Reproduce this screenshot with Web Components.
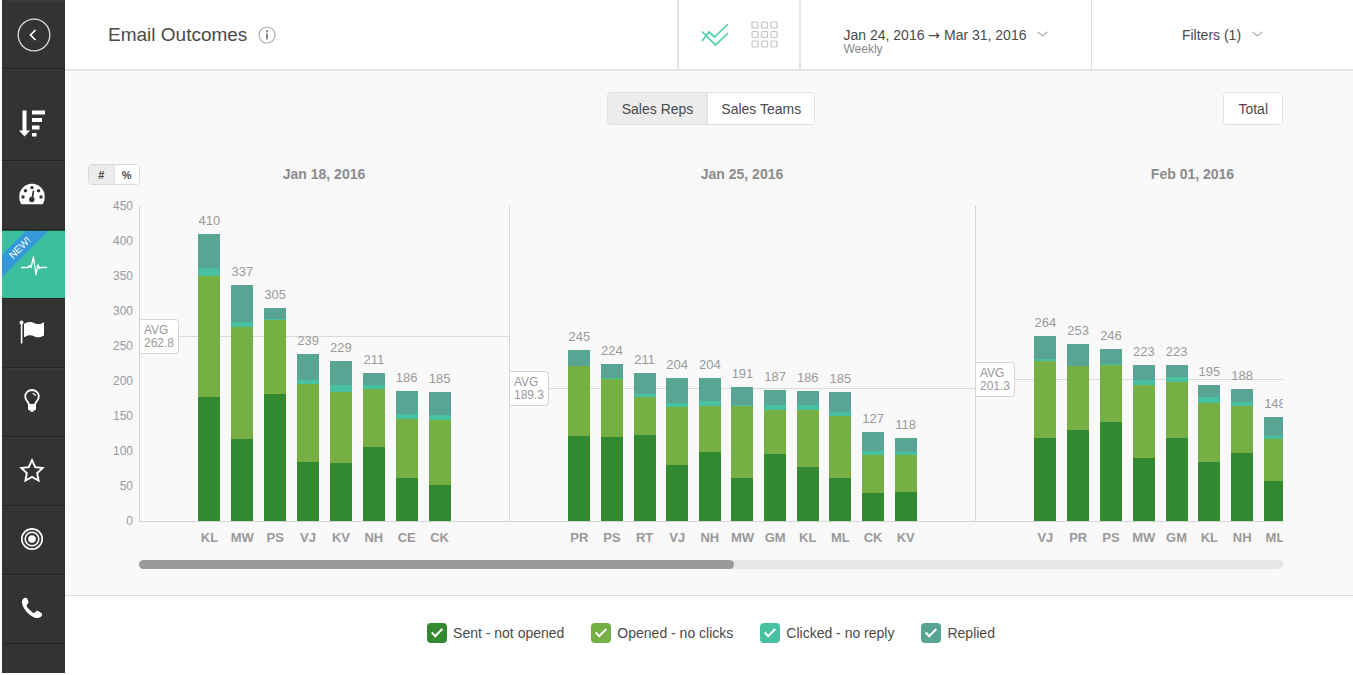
<!DOCTYPE html>
<html lang="en">
<head>
<meta charset="utf-8">
<title>Email Outcomes</title>
<style>
  body { margin: 0; background: #fff; color: #4a4a4a; font-family: "Liberation Sans", Arial, Helvetica, sans-serif; font-size: 14px; }
</style>
</head>
<body>
<outcomes-app></outcomes-app>

<script>
const SERIES = [
  { name: 'Sent - not opened', color: '#33892f' },
  { name: 'Opened - no clicks', color: '#76af44' },
  { name: 'Clicked - no reply', color: '#47c19f' },
  { name: 'Replied', color: '#58a594' }
];
const SCALE_MAX = 450;
const GROUPS = [
  { title: 'Jan 18, 2016', avg: 262.8, width: 370, columns: 8, bars: [
    ['KL', 177, 173, 12, 48], ['MW', 117, 160, 7, 53], ['PS', 181, 106, 1, 17], ['VJ', 84, 112, 6, 37],
    ['KV', 83, 102, 10, 34], ['NH', 106, 82, 6, 17], ['CE', 61, 85, 7, 33], ['CK', 51, 93, 8, 33]] },
  { title: 'Jan 25, 2016', avg: 189.3, width: 466, columns: 11, bars: [
    ['PR', 122, 100, 0, 23], ['PS', 120, 83, 1, 20], ['RT', 123, 54, 5, 29], ['VJ', 80, 83, 6, 35],
    ['NH', 98, 67, 7, 32], ['MW', 62, 102, 2, 25], ['GM', 96, 63, 7, 21], ['KL', 77, 81, 8, 20],
    ['ML', 61, 89, 6, 29], ['CK', 40, 55, 5, 27], ['KV', 42, 53, 3, 20]] },
  { title: 'Feb 01, 2016', avg: 201.3, width: 435, columns: 10, bars: [
    ['VJ', 119, 109, 3, 33], ['PR', 130, 91, 1, 31], ['PS', 142, 81, 2, 21], ['MW', 90, 105, 6, 22],
    ['GM', 119, 80, 7, 17], ['KL', 84, 84, 9, 18], ['NH', 97, 68, 5, 18], ['ML', 57, 60, 5, 26]] }
];

class BaseElement extends HTMLElement {
  connectedCallback() {
    if (this.shadowRoot) return;
    this.attachShadow({ mode: 'open' }).innerHTML = this.render();
  }
}

/* ---------- side navigation ---------- */
customElements.define('nav-item', class extends BaseElement {
  render() {
    return `<style>
      :host { display: block; height: 69px; }
      :host([tall]) { height: 92px; }
      a { position: relative; box-sizing: border-box; display: flex; align-items: center; justify-content: center;
          height: 100%; padding: 0 4px 4px 0; border-bottom: 1px solid #242424; border-top: 1px solid #3a3a3a; color: #fff; overflow: hidden; }
      :host([home]) a { padding: 0; }
      :host([tall]) a { padding-top: 20px; }
      :host([current]) a { background: #3cbf9c; border-top: 1px solid #1f4a3e; border-bottom-color: #222; padding: 2px 0 0; }
      .ribbon { position: absolute; left: -30px; top: 9px; width: 96px; line-height: 16px; text-align: center;
          background: #3498db; color: #fff; font-size: 10px; transform: rotate(-45deg); }
    </style>
    <a href="#" aria-label="${this.getAttribute('label')}"><slot></slot>${
      this.hasAttribute('badge') ? `<span class="ribbon">${this.getAttribute('badge')}</span>` : ''}</a>`;
  }
});

customElements.define('side-nav', class extends BaseElement {
  render() {
    return `<style>
      :host { display: block; width: 63px; flex: none; margin-left: 2px; background: #333; }
      svg { display: block; }
    </style>
    <nav aria-label="Main">
      <nav-item home label="Back"><svg width="34" height="34" viewBox="0 0 34 34" fill="none" stroke="#ddd">
        <circle cx="17" cy="17" r="15.8" stroke-width="1.3"/><path d="M18.5 12l-5 5 5 5" stroke="#fff" stroke-width="1.7"/></svg></nav-item>
      <nav-item tall label="Rankings"><svg width="26" height="28" viewBox="0 0 26 28" fill="#fff">
        <path d="M3.500 1.500h4v20h3.500L5.500 27.500 0 21.500h3.500zM13 1.500h13v4H13zM13 9h10v4H13zM13 16.500h7.500v4H13zM13 24h4.500v3.500H13z"/></svg></nav-item>
      <nav-item label="Dashboard"><svg width="26" height="22" viewBox="0 0 26 22">
        <path d="M1.800 20.500A12.600 12.600 0 0 1 0.300 13.500a12.700 12.700 0 0 1 25.400 0 12.600 12.600 0 0 1-1.500 7q-.4.7-1.200.7H3q-.8 0-1.200-.7z" fill="#fff"/>
        <g fill="#333"><circle cx="4" cy="14" r="1.700"/><circle cx="6.500" cy="7.800" r="1.700"/><circle cx="13" cy="4.600" r="1.700"/><circle cx="19.500" cy="7.800" r="1.700"/><circle cx="22" cy="14" r="1.700"/><circle cx="12.800" cy="16.500" r="2.700"/><path d="M13.800 7.500l1.500.3-1.300 9h-2z"/></g></svg></nav-item>
      <nav-item current badge="NEW!" label="Activity"><svg width="26" height="20" viewBox="0 0 26 20" fill="none" stroke="#fff" stroke-width="1.300" stroke-linejoin="round">
        <path d="M0 11.500h7l1.500-2 1.500 2 2.500-10.500 2.500 17.500 2-9.500 1.500 3.500 1.300-1H26"/></svg></nav-item>
      <nav-item label="Goals"><svg width="26" height="24" viewBox="0 0 26 24" fill="#fff">
        <circle cx="2.500" cy="2.500" r="2"/><path d="M1.800 3h1.600v20.500H1.800zM5 4c4-2.500 7-2.500 10.500-.8 3.500 1.600 6 1 9.500-1v13.300c-3.500 2-6 2.500-9.500.9-3.500-1.700-6.500-1.500-10.500.9z"/></svg></nav-item>
      <nav-item label="Insights"><svg width="18" height="24" viewBox="0 0 18 24" fill="none" stroke="#fff">
        <path d="M6 16c0-3-3.800-4.500-3.800-8.500a6.800 6.500 0 0 1 13.600 0c0 4-3.800 5.500-3.800 8.500z" stroke-width="1.800"/>
        <path d="M9.500 4.500c1.800 0 2.800 1 2.900 2.500" stroke-width="1.200"/><path d="M5 15.500h8v5l-2 1-1 1.500H8l-1-1.500-2-1z" fill="#fff" stroke="none"/></svg></nav-item>
      <nav-item label="Favorites"><svg width="26" height="24" viewBox="0 0 26 24" fill="none" stroke="#fff" stroke-width="1.900">
        <path d="M13 2.200l3.200 6.900 7.500.9-5.500 5.100 1.400 7.400-6.600-3.600-6.600 3.600 1.400-7.400-5.500-5.100 7.500-.9z"/></svg></nav-item>
      <nav-item label="Targets"><svg width="24" height="24" viewBox="0 0 24 24" fill="none" stroke="#fff">
        <circle cx="12" cy="12" r="10.200" stroke-width="1.700"/><circle cx="12" cy="12" r="6.800" stroke-width="1.600"/><circle cx="12" cy="12" r="3.800" fill="#fff" stroke="none"/></svg></nav-item>
      <nav-item label="Calls"><svg width="22" height="22" viewBox="0 0 22 22" fill="#fff">
        <path d="M1 4.500C1.300 2 3 .8 5 .8c.8 0 1.500 1 2.600 4.200.5 1.500-2 2.200-2 3.500 0 1.800 5.500 7.400 7.500 7.400 1.300 0 2-2.400 3.300-2.100 1.300.4 4.600 2.300 4.700 3.200.2 2.200-2 4-5 4C10 21 .4 11 1 4.500z"/></svg></nav-item>
    </nav>`;
  }
});

/* ---------- header ---------- */
customElements.define('page-header', class extends BaseElement {
  render() {
    const chevron = '<svg width="11" height="6" viewBox="0 0 11 6" fill="none" stroke="#b5b5b5" stroke-width="1.300"><path d="M.5.8l5 4 5-4"/></svg>';
    return `<style>
      :host { display: flex; height: 69px; border-bottom: 2px solid #e6e6e6; background: #fff; }
      .title { flex: 1; display: flex; align-items: center; gap: 11px; padding-left: 43px; }
      h1 { margin: 0; font-size: 19px; font-weight: 400; line-height: 24px; }
      svg { display: block; }
      button { margin: 0; padding: 0; border: 0; background: none; color: inherit; font: inherit; cursor: pointer; }
      .views { box-sizing: border-box; width: 122px; display: flex; align-items: center; justify-content: center; gap: 22px; border-left: 2px solid #e6e6e6; }
      .menu { box-sizing: border-box; display: flex; align-items: flex-start; justify-content: center; gap: 11px; padding-top: 27px; line-height: 16px; border-left: 1px solid #ddd; text-align: left; }
      .menu svg { margin-top: 4px; }
      .range { width: 292px; border-left: 2px solid #e6e6e6; }
      .filters { width: 262px; }
      .arrow { font-family: "DejaVu Sans", sans-serif; line-height: 12px; }
      small { display: block; font-size: 12px; line-height: 12px; color: #888; }
    </style>
    <div class="title"><h1>Email Outcomes</h1>
      <button aria-label="About this report"><svg width="18" height="18" viewBox="0 0 18 18" fill="none" stroke="#aaa" stroke-width="1.200">
        <circle cx="9" cy="9" r="8"/><path d="M9 7.500v6" stroke="#888" stroke-width="2"/><path d="M9 4.200v2" stroke="#888" stroke-width="2"/></svg></button></div>
    <div class="views">
      <button aria-label="Chart view" aria-pressed="true"><svg width="28" height="26" viewBox="0 0 28 26" fill="none" stroke="#4dcfa9" stroke-width="1.700">
        <path d="M1 9.500l13.500 13.500L27 11M1 19l7-9 5.500 5L27 2"/></svg></button>
      <button aria-label="Grid view" aria-pressed="false"><svg width="27" height="27" viewBox="0 0 27 27" fill="none" stroke="#c4c4c4" stroke-width="1.200">
        ${[0, 1, 2].map(r => [0, 1, 2].map(c => `<rect x="${1 + c * 9.5}" y="${1 + r * 9.5}" width="6" height="6" rx="1"/>`).join('')).join('')}</svg></button>
    </div>
    <button class="menu range"><span>Jan 24, 2016 <span class="arrow">→</span> Mar 31, 2016<small>Weekly</small></span>${chevron}</button>
    <button class="menu filters"><span>Filters (1)</span>${chevron}</button>`;
  }
});

/* ---------- segmented buttons ---------- */
customElements.define('button-group', class extends BaseElement {
  render() {
    const options = this.getAttribute('options').split('|');
    const on = this.getAttribute('selected');
    return `<style>
      :host { display: inline-flex; box-sizing: border-box; height: 33px; border: 1px solid #e0e0e0; border-radius: 4px; overflow: hidden; background: #fff; }
      button { margin: 0; padding: 0 14px; border: 0; background: #fff; color: inherit; font: inherit; cursor: pointer; }
      button + button { border-left: 1px solid #e0e0e0; padding: 0 13px; }
      button[aria-pressed="true"] { background: #ececec; }
      :host([small]) { height: 21px; width: 52px; font-size: 11px; font-weight: 700; border-color: #d8d8d8; }
      :host([small]) button { flex: 1; padding: 0; }
    </style>${options.map(o => `<button aria-pressed="${o === on}">${o}</button>`).join('')}`;
  }
  connectedCallback() {
    super.connectedCallback();
    const buttons = [...this.shadowRoot.querySelectorAll('button')];
    if (buttons.length > 1) buttons.forEach(b => b.onclick = () => buttons.forEach(x => x.setAttribute('aria-pressed', x === b)));
  }
});

/* ---------- one week of stacked bars ---------- */
customElements.define('week-group', class extends BaseElement {
  render() {
    const g = GROUPS[+this.getAttribute('index')];
    const pct = v => v / SCALE_MAX * 100 + '%';
    return `<style>
      :host { display: block; flex: none; width: ${g.width}px; color: #999; }
      h2 { margin: 0 0 22px; font-size: 14px; line-height: 20px; text-align: center; color: #8c8c8c; }
      .plot { position: relative; box-sizing: border-box; height: 316px; border-left: 1px solid #d6d6d6; border-bottom: 1px solid #d6d6d6; padding: 0 53px; }
      .cols { position: relative; height: 100%; display: grid; grid-template-columns: repeat(${g.columns}, 1fr); justify-items: center; }
      .col { height: 100%; display: flex; flex-direction: column; justify-content: flex-end; align-items: center; }
      .value { font-size: 13px; line-height: 14px; margin-bottom: 6px; }
      .part { width: 22px; flex: none; }
      .avg { position: absolute; left: 0; right: 0; bottom: ${pct(g.avg)}; height: 1px; background: #d9d9d9; }
      .tag { position: absolute; left: 0; bottom: -17px; box-sizing: border-box; height: 35px; padding: 4px; font-size: 12px; line-height: 13px;
          background: #fff; border: 1px solid #d6d6d6; border-left: 0; border-radius: 0 4px 4px 0; }
      .names { display: grid; grid-template-columns: repeat(${g.columns}, 1fr); justify-items: center; padding: 8px 53px 0 54px; font-size: 13px; font-weight: 700; line-height: 16px; }
    </style>
    <h2>${g.title}</h2>
    <div class="plot">
      <div class="avg"><div class="tag">AVG<br>${g.avg}</div></div>
      <div class="cols">${g.bars.map(([, ...v]) => `<div class="col"><span class="value">${v.reduce((a, b) => a + b)}</span>${
        v.map((n, i) => `<div class="part" style="height:${pct(n)};background:${SERIES[i].color}"></div>`).reverse().join('')}</div>`).join('')}</div>
    </div>
    <div class="names">${g.bars.map(b => `<span>${b[0]}</span>`).join('')}</div>`;
  }
});

customElements.define('outcomes-chart', class extends BaseElement {
  render() {
    const ticks = [];
    for (let t = SCALE_MAX; t >= 0; t -= 50) ticks.push(t);
    return `<style>
      :host { display: grid; grid-template-columns: 74px minmax(0, 1fr); padding-right: 70px; }
      .axis { padding-left: 23px; }
      .ticks { display: flex; flex-direction: column; justify-content: space-between; height: 329px; margin-top: 14px; padding-right: 6px;
          text-align: right; font-size: 12px; line-height: 14px; color: #999; }
      .scroller { display: flex; overflow: hidden; }
      .track { grid-column: 2; height: 9px; margin-top: 14px; border-radius: 5px; background: #e6e6e6; }
      .thumb { width: 52%; height: 100%; border-radius: 5px; background: #999; }
    </style>
    <div class="axis"><button-group small options="#|%" selected="#"></button-group>
      <div class="ticks">${ticks.map(t => `<span>${t}</span>`).join('')}</div></div>
    <div class="scroller">${GROUPS.map((g, i) => `<week-group index="${i}"></week-group>`).join('')}</div>
    <div class="track"><div class="thumb"></div></div>`;
  }
});

/* ---------- legend ---------- */
customElements.define('series-legend', class extends BaseElement {
  render() {
    return `<style>
      :host { display: flex; justify-content: center; gap: 27px; padding: 27px 70px 27px 74px; background: #fff; border-top: 1px solid #dcdcdc; }
      label { display: flex; align-items: center; gap: 6px; line-height: 20px; cursor: pointer; }
      input { appearance: none; position: relative; width: 20px; height: 20px; margin: 0; border-radius: 4px; background: #ccc; }
      input:checked { background: var(--tint); }
      input:checked::before { content: ""; position: absolute; left: 7px; top: 3px; width: 4px; height: 9px;
          border: solid #fff; border-width: 0 2px 2px 0; transform: rotate(45deg); }
    </style>${SERIES.map(s => `<label><input type="checkbox" checked style="--tint:${s.color}">${s.name}</label>`).join('')}`;
  }
});

/* ---------- page ---------- */
customElements.define('outcomes-app', class extends BaseElement {
  render() {
    return `<style>
      :host { display: flex; min-height: calc(100vh - 2px); }
      main { flex: 1; min-width: 0; }
      .panel { padding: 21px 0 26px; background: #f9f9f9; }
      .bar { display: grid; grid-template-columns: 1fr auto 1fr; padding: 0 70px 39px 74px; }
      .total { grid-column: 3; justify-self: end; }
    </style>
    <side-nav></side-nav>
    <main>
      <page-header></page-header>
      <section class="panel">
        <div class="bar"><span></span><button-group options="Sales Reps|Sales Teams" selected="Sales Reps"></button-group>
          <button-group class="total" options="Total"></button-group></div>
        <outcomes-chart></outcomes-chart>
      </section>
      <series-legend></series-legend>
    </main>`;
  }
});
</script>
</body>
</html>
